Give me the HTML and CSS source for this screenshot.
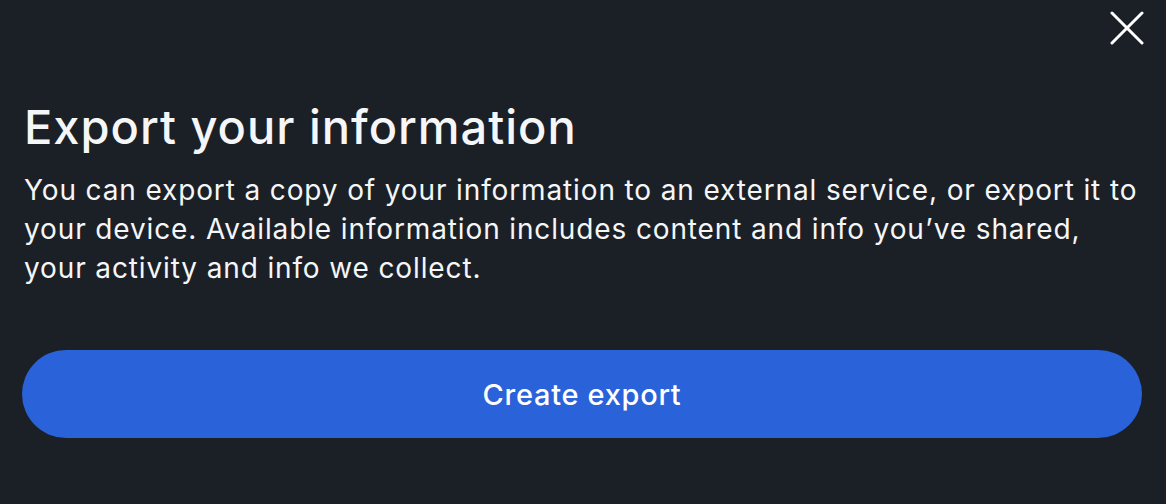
FILE: index.html
```html
<!DOCTYPE html>
<html lang="en">
<head>
    <meta charset="UTF-8">
    <title>Export your information</title>
    <link rel="stylesheet" href="styles.css">
</head>
<body>
    <div class="topbar">
        <button class="close" aria-label="Close">
            <svg width="34" height="34" viewBox="0 0 34 34">
                <path d="M2 2 L32 32 M32 2 L2 32" stroke="#fff" stroke-width="3" stroke-linecap="round"/>
            </svg>
        </button>
    </div>
    <div class="content">
        <h1>Export your information</h1>
        <p>You can export a copy of your information to an external service, or export it to<br>
        your device. Available information includes content and info you’ve shared,<br>
        your activity and info we collect.</p>
        <button class="primary">Create export</button>
    </div>
</body>
</html>
```

FILE: styles.css
```css
body {
    margin: 0;
    background: #1b2027;
    color: #f5f6f7;
    font-family: 'Inter', sans-serif;
}
.topbar {
    display: flex;
    justify-content: flex-end;
    padding: 11px 22px 0 0;
}
.close {
    display: block;
    background: none;
    border: none;
    padding: 0;
    width: 34px;
    height: 34px;
    cursor: pointer;
}
.close svg {
    display: block;
}
.content {
    padding: 0 24px;
}
h1 {
    font-size: 47px;
    font-weight: 500;
    letter-spacing: 1px;
    margin: 54px 0 0;
    line-height: 56px;
}
p {
    font-size: 28px;
    letter-spacing: 0.87px;
    line-height: 39px;
    margin: 16px 0 0;
    white-space: nowrap;
}
.primary {
    display: block;
    width: calc(100% + 2px);
    margin: 62px 0 0 -2px;
    height: 88px;
    border: none;
    border-radius: 44px;
    background: #2962d9;
    color: #fff;
    font-family: inherit;
    font-size: 29px;
    font-weight: 500;
    letter-spacing: 0.7px;
}
```
